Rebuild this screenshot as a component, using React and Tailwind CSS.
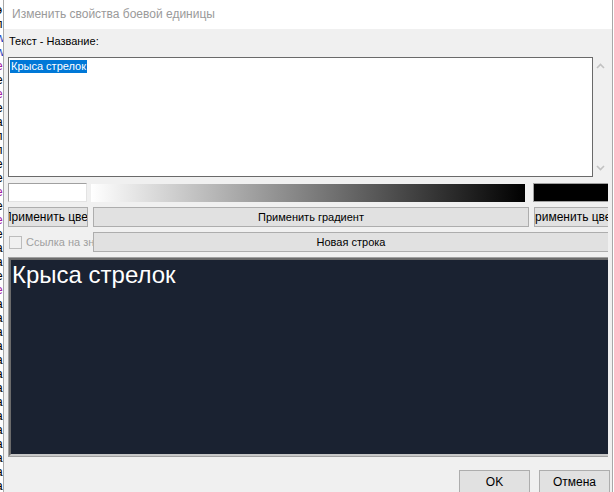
import React from "react";

const stripLines = [
  { c: "#000", t: "э" },
  { c: "#000", t: "п" },
  { c: "#1f3fbf", t: "w" },
  { c: "#1f3fbf", t: "w" },
  { c: "#a020a0", t: "e" },
  { c: "#000", t: "е" },
  { c: "#a020a0", t: "е" },
  { c: "#000", t: "е" },
  { c: "#000", t: "а" },
  { c: "#000", t: "п" },
  { c: "#000", t: "п" },
  { c: "#000", t: "е" },
  { c: "#000", t: "е" },
  { c: "#a020a0", t: "е" },
  { c: "#000", t: "е" },
  { c: "#a020a0", t: "е" },
  { c: "#000", t: "е" },
  { c: "#000", t: "а" },
  { c: "#000", t: "а" },
  { c: "#000", t: "е" },
  { c: "#a020a0", t: "е" },
  { c: "#000", t: "а" },
  { c: "#000", t: "а" },
  { c: "#000", t: "а" },
  { c: "#000", t: "а" },
  { c: "#000", t: "а" },
  { c: "#000", t: "а" },
  { c: "#000", t: "а" },
  { c: "#000", t: "а" },
  { c: "#000", t: "а" },
  { c: "#000", t: "а" },
  { c: "#000", t: "а" },
  { c: "#000", t: "а" },
  { c: "#000", t: "а" },
  { c: "#000", t: "а" },
];

function WinButton({ children, className = "" }) {
  return (
    <div
      className={
        "flex items-center justify-center overflow-hidden whitespace-nowrap bg-[#e1e1e1] border border-[#adadad] text-black leading-none " +
        className
      }
    >
      {children}
    </div>
  );
}

export default function App() {
  return (
    <div
      className="w-[614px] h-[492px] flex overflow-hidden bg-white"
      style={{ fontFamily: '"Liberation Sans", Arial, sans-serif' }}
    >
      {/* background window sliver */}
      <div className="w-[3px] h-full overflow-hidden bg-white flex flex-col pt-[3px]">
        {stripLines.map((l, i) => (
          <div
            key={i}
            className="h-[14px] text-[12px] leading-[14px] -ml-[4px]"
            style={{ color: l.c }}
          >
            {l.t}
          </div>
        ))}
      </div>

      {/* dialog */}
      <div className="w-[610px] h-full flex flex-col border-x border-[#a8a8a8] bg-[#f0f0f0]">
        {/* title bar */}
        <div className="h-[29px] shrink-0 bg-white flex items-center pl-[8px] pb-[2px]">
          <span className="text-[12px] text-[#9a9a9a]">Изменить свойства боевой единицы</span>
        </div>

        {/* client */}
        <div className="flex-1 flex flex-col px-[4px]">
          <div className="h-[16px] mt-[4px] flex items-center pl-[1px] text-[11px] text-black leading-none">
            Текст - Название:
          </div>

          {/* textarea with scrollbar */}
          <div className="mt-[8px] flex h-[120px]">
            <div className="w-[589px] h-full bg-white border border-[#6a6a6a] pl-[1px] pt-[2px] flex flex-col items-start">
              <div className="bg-[#0078d7] text-white text-[11px] leading-[13px] px-[1px] whitespace-nowrap">
                Крыса стрелок
              </div>
            </div>
            <div className="w-[15px] h-full flex flex-col items-center justify-between py-[6px]">
              <svg width="9" height="6" viewBox="0 0 9 6">
                <path d="M1 5 L4.5 1.5 L8 5" fill="none" stroke="#c2c2c2" strokeWidth="1.6" />
              </svg>
              <svg width="9" height="6" viewBox="0 0 9 6">
                <path d="M1 1 L4.5 4.5 L8 1" fill="none" stroke="#c2c2c2" strokeWidth="1.6" />
              </svg>
            </div>
          </div>

          {/* swatches */}
          <div className="mt-[6px] flex h-[19px]">
            <div className="w-[79px] h-full bg-white border border-[#a0a0a0] border-r-[#e3e3e3] border-b-[#e3e3e3]" />
            <div
              className="ml-[4px] w-[434px] h-[18px] mt-[1px]"
              style={{ background: "linear-gradient(to right, #ffffff, #000000)" }}
            />
            <div className="ml-[8px] flex-1 h-full bg-black border border-[#a0a0a0] border-r-0" />
          </div>

          {/* buttons row */}
          <div className="mt-[5px] flex h-[20px]">
            <WinButton className="w-[80px] h-full text-[12px]">Применить цвет</WinButton>
            <WinButton className="ml-[5px] w-[436px] h-full text-[11px]">Применить градиент</WinButton>
            <WinButton className="ml-[5px] flex-1 h-full border-r-0 text-[12px]">Применить цвет</WinButton>
          </div>

          {/* checkbox + new line */}
          <div className="mt-[5px] flex h-[20px]">
            <div className="w-[85px] h-full flex items-center overflow-hidden whitespace-nowrap pl-[1px]">
              <div className="w-[13px] h-[13px] shrink-0 border border-[#bcbcbc] bg-[#f0f0f0]" />
              <span className="ml-[4px] text-[11px] text-[#a0a0a0] leading-none">Ссылка на значение</span>
            </div>
            <WinButton className="flex-1 h-full border-r-0 text-[11px]">Новая строка</WinButton>
          </div>

          {/* preview */}
          <div className="mt-[5px] h-[200px] border border-[#a0a0a0] border-r-0">
            <div className="w-full h-full border-2 border-[#6b6b6b] border-r-0 border-b-[#c8c8c8] bg-[#1a2231] pl-[1px] pt-[1px]">
              <span className="text-[24px] leading-[28px] text-white">Крыса стрелок</span>
            </div>
          </div>

          {/* bottom buttons */}
          <div className="mt-[13px] flex justify-end -mr-[2px]">
            <WinButton className="w-[71px] h-[24px] text-[12px]">OK</WinButton>
            <WinButton className="ml-[9px] w-[71px] h-[24px] text-[12px]">Отмена</WinButton>
          </div>
        </div>
      </div>
    </div>
  );
}
